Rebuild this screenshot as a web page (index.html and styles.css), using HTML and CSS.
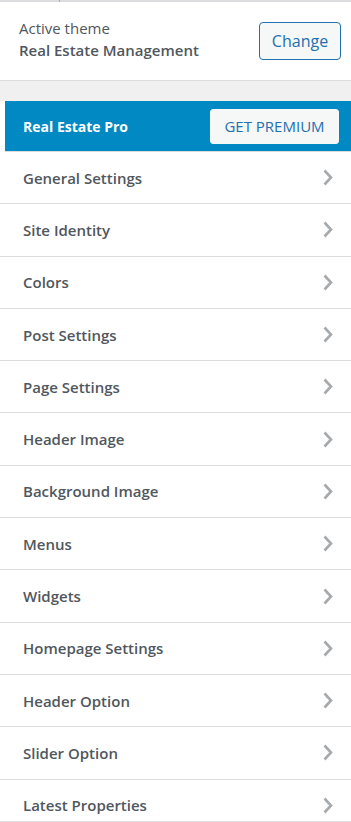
FILE: index.html
```html
<!DOCTYPE html>
<html lang="en">
<head>
  <meta charset="UTF-8">
  <meta name="viewport" content="width=device-width, initial-scale=1.0">
  <title>Customize</title>
  <link rel="stylesheet" href="styles.css">
</head>
<body>
  <div class="panel">
    <div class="top-edge"></div>
    <div class="theme-info">
      <div class="theme-text">
        <span class="theme-label">Active theme</span>
        <strong class="theme-name">Real Estate Management</strong>
      </div>
      <button class="btn change-btn">Change</button>
    </div>
    <div class="gap"></div>
    <div class="pro-bar">
      <span class="pro-title">Real Estate Pro</span>
      <button class="btn pro-btn">GET PREMIUM</button>
    </div>
    <ul class="sections">
      <li class="section">General Settings<svg class="chev" width="10" height="17" viewBox="0 0 10 17"><polyline points="1.5,1.5 8,8.5 1.5,15.5"/></svg></li>
      <li class="section">Site Identity<svg class="chev" width="10" height="17" viewBox="0 0 10 17"><polyline points="1.5,1.5 8,8.5 1.5,15.5"/></svg></li>
      <li class="section">Colors<svg class="chev" width="10" height="17" viewBox="0 0 10 17"><polyline points="1.5,1.5 8,8.5 1.5,15.5"/></svg></li>
      <li class="section">Post Settings<svg class="chev" width="10" height="17" viewBox="0 0 10 17"><polyline points="1.5,1.5 8,8.5 1.5,15.5"/></svg></li>
      <li class="section">Page Settings<svg class="chev" width="10" height="17" viewBox="0 0 10 17"><polyline points="1.5,1.5 8,8.5 1.5,15.5"/></svg></li>
      <li class="section">Header Image<svg class="chev" width="10" height="17" viewBox="0 0 10 17"><polyline points="1.5,1.5 8,8.5 1.5,15.5"/></svg></li>
      <li class="section">Background Image<svg class="chev" width="10" height="17" viewBox="0 0 10 17"><polyline points="1.5,1.5 8,8.5 1.5,15.5"/></svg></li>
      <li class="section">Menus<svg class="chev" width="10" height="17" viewBox="0 0 10 17"><polyline points="1.5,1.5 8,8.5 1.5,15.5"/></svg></li>
      <li class="section">Widgets<svg class="chev" width="10" height="17" viewBox="0 0 10 17"><polyline points="1.5,1.5 8,8.5 1.5,15.5"/></svg></li>
      <li class="section">Homepage Settings<svg class="chev" width="10" height="17" viewBox="0 0 10 17"><polyline points="1.5,1.5 8,8.5 1.5,15.5"/></svg></li>
      <li class="section">Header Option<svg class="chev" width="10" height="17" viewBox="0 0 10 17"><polyline points="1.5,1.5 8,8.5 1.5,15.5"/></svg></li>
      <li class="section">Slider Option<svg class="chev" width="10" height="17" viewBox="0 0 10 17"><polyline points="1.5,1.5 8,8.5 1.5,15.5"/></svg></li>
      <li class="section">Latest Properties<svg class="chev" width="10" height="17" viewBox="0 0 10 17"><polyline points="1.5,1.5 8,8.5 1.5,15.5"/></svg></li>
    </ul>
  </div>
</body>
</html>
```

FILE: styles.css
```css
body{
  margin: 0;
  padding: 0;
  background: #fff;
  font-family: "Open Sans", "Noto Sans", sans-serif;
  color: #50575e;
  overflow: hidden;
}
.panel{
  display: flex;
  flex-direction: column;
  height: 822px;
}
.top-edge{
  position: relative;
  flex: none;
  height: 2px;
  background: #dcdcde;
}
.top-edge::after{
  content: "";
  position: absolute;
  left: 59px;
  top: 0;
  width: 1px;
  height: 2px;
  background: #a7aaad;
}
.theme-info{
  flex: none;
  display: flex;
  align-items: center;
  justify-content: space-between;
  height: 79px;
  padding: 0 10px 0 19px;
  border-bottom: 1px solid #dcdcde;
  box-sizing: border-box;
}
.theme-text{
  display: flex;
  flex-direction: column;
  line-height: 22px;
  margin-top: -4px;
  font-size: 15px;
}
.theme-name{
  font-weight: 600;
}
.btn{
  font-family: inherit;
  background: #f6f7f7;
  color: #2271b1;
  border: 1px solid #2271b1;
  border-radius: 4px;
  cursor: pointer;
  padding: 0;
}
.change-btn{
  width: 82px;
  height: 38px;
  font-size: 16px;
}
.gap{
  flex: none;
  height: 20px;
  background: #f0f0f1;
}
.pro-bar{
  flex: none;
  display: flex;
  align-items: center;
  justify-content: space-between;
  height: 50px;
  margin-left: 5px;
  padding: 0 12px 0 18px;
  background: #0089c2;
  border-bottom: 1px solid #dcdcde;
}
.pro-title{
  color: #fff;
  font-size: 14px;
  font-weight: 700;
}
.pro-btn{
  width: 129px;
  height: 35px;
  font-size: 15px;
  border-color: #f6f7f7;
  border-radius: 3px;
}
.sections{
  flex: 1;
  min-height: 0;
  overflow: hidden;
  list-style: none;
  margin: 0;
  padding: 0;
  border-bottom: 1px solid #dcdcde;
}
.section{
  display: flex;
  align-items: center;
  justify-content: space-between;
  height: 51.3px;
  padding: 0 18px 0 23px;
  border-bottom: 1px solid #dcdcde;
  font-size: 15px;
  font-weight: 600;
}
.chev{
  fill: none;
  stroke: #a7aaad;
  stroke-width: 2.6;
}
```
